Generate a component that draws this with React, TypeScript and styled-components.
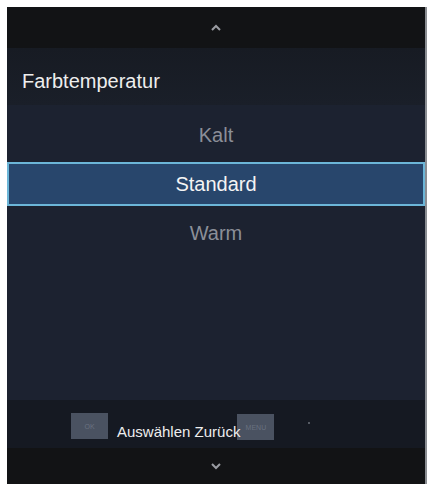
import React from "react";
import styled, { createGlobalStyle } from "styled-components";

const GlobalStyle = createGlobalStyle`
  html, body {
    margin: 0;
    padding: 0;
    background: #ffffff;
  }
  body {
    font-family: "Liberation Sans", Arial, sans-serif;
  }
`;

const Page = styled.div`
  width: 429px;
  height: 484px;
  padding: 7px 2px 0 7px;
  box-sizing: border-box;
  background: #ffffff;
`;

const Panel = styled.div`
  height: 100%;
  display: flex;
  flex-direction: column;
  background: #1c2230;
  border-right: 2px solid #8a8d92;
`;

const ArrowBar = styled.div<{ $h: number }>`
  height: ${(p) => p.$h}px;
  flex: none;
  display: flex;
  align-items: center;
  justify-content: center;
  background: #121315;
  color: #9a9ca2;
`;

const TitleBar = styled.div`
  height: 57px;
  flex: none;
  display: flex;
  align-items: center;
  padding: 10px 0 0 15px;
  box-sizing: border-box;
  background: linear-gradient(#171b23, #1a1f29);
  color: #eeeeee;
  font-size: 20px;
`;

const List = styled.div`
  flex: 1;
  display: flex;
  flex-direction: column;
  gap: 5px;
  padding-top: 8px;
`;

const Item = styled.div<{ $selected?: boolean }>`
  height: 44px;
  display: flex;
  align-items: center;
  justify-content: center;
  box-sizing: border-box;
  font-size: 20px;
  color: ${(p) => (p.$selected ? "#f4f4f4" : "#8b8f98")};
  background: ${(p) => (p.$selected ? "#28466c" : "transparent")};
  border: 2px solid ${(p) => (p.$selected ? "#6cb6d8" : "transparent")};
`;

const Footer = styled.div`
  height: 48px;
  flex: none;
  display: flex;
  align-items: center;
  padding-left: 64px;
  background: #151922;
`;

const KeyCap = styled.div`
  width: 37px;
  height: 26px;
  flex: none;
  background: #4a5261;
  color: #697180;
  font-size: 7px;
  display: flex;
  align-items: center;
  justify-content: center;
  margin-top: 4px;
`;

const Hint = styled.span`
  color: #eeeeee;
  font-size: 15px;
  margin: 14px 0 0 9px;
  position: relative;
  z-index: 1;
  white-space: nowrap;
`;

const MenuCap = styled(KeyCap)`
  margin-left: -3px;
  margin-top: 6px;
`;

const Dot = styled.span`
  width: 2px;
  height: 2px;
  background: #555a63;
  margin: 0 0 2px 34px;
`;

const Chevron = ({ up }: { up?: boolean }) => (
  <svg width="10" height="7" viewBox="0 0 10 7">
    <path
      d={up ? "M1 6 L5 2 L9 6" : "M1 1 L5 5 L9 1"}
      fill="none"
      stroke="currentColor"
      strokeWidth="2"
    />
  </svg>
);

export default function App() {
  return (
    <>
      <GlobalStyle />
      <Page>
        <Panel>
          <ArrowBar $h={41}>
            <Chevron up />
          </ArrowBar>
          <TitleBar>Farbtemperatur</TitleBar>
          <List>
            <Item>Kalt</Item>
            <Item $selected>Standard</Item>
            <Item>Warm</Item>
          </List>
          <Footer>
            <KeyCap>OK</KeyCap>
            <Hint>Auswählen Zurück</Hint>
            <MenuCap>MENU</MenuCap>
            <Dot />
          </Footer>
          <ArrowBar $h={36}>
            <Chevron />
          </ArrowBar>
        </Panel>
      </Page>
    </>
  );
}
